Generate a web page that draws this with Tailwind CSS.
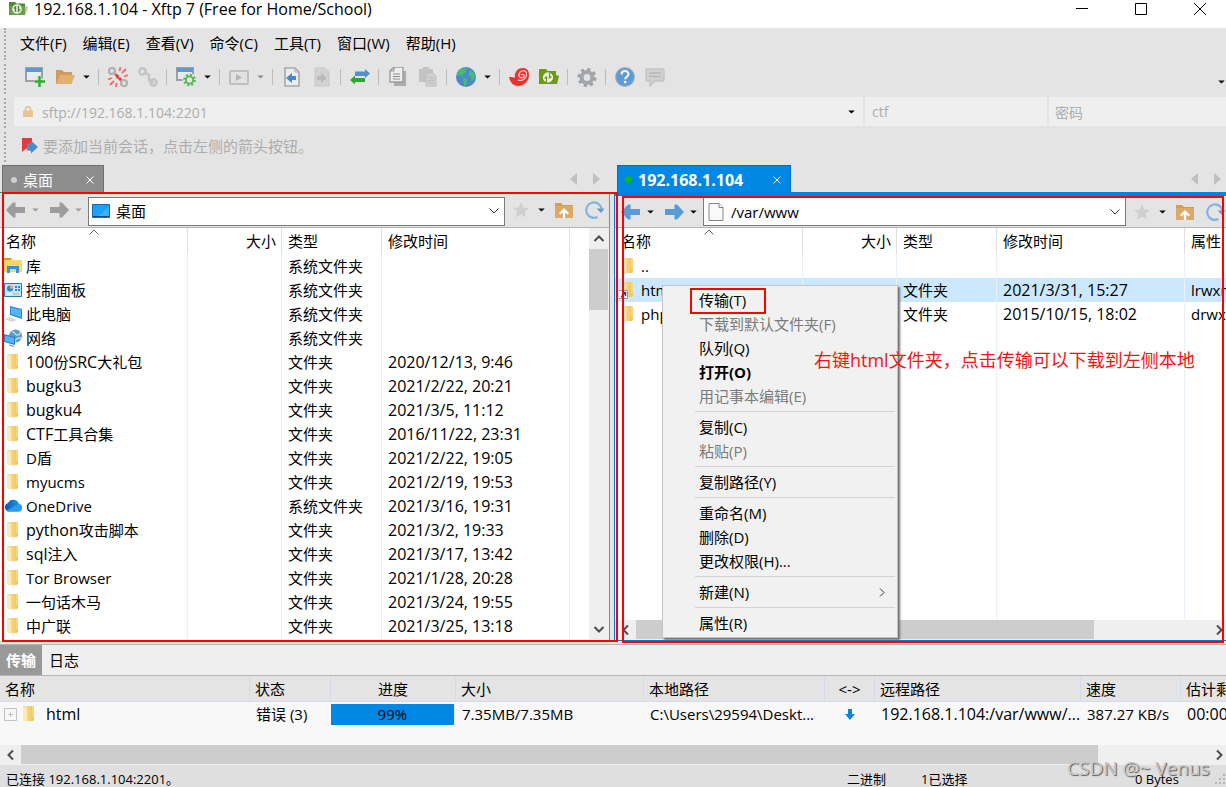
<!DOCTYPE html>
<html lang="zh-CN">
<head>
<meta charset="utf-8">
<title>192.168.1.104 - Xftp 7</title>
<script src="https://cdn.jsdelivr.net/npm/@tailwindcss/browser@4"></script>
</head>
<body class="relative flex h-screen flex-col overflow-hidden bg-[#e4e4e4] font-['Open_Sans','Noto_Sans_CJK_SC',sans-serif] text-[15px] leading-6 text-black whitespace-nowrap">

<svg class="absolute h-0 w-0" aria-hidden="true">
  <defs>
    <linearGradient id="gold" x1="0" x2="1"><stop offset="0" stop-color="#fae198"/><stop offset="1" stop-color="#eec45a"/></linearGradient>
    <linearGradient id="cloud" x1="0" x2="1"><stop offset="0" stop-color="#0a55b0"/><stop offset="1" stop-color="#28a8ea"/></linearGradient>
  </defs>
  <symbol id="folder" viewBox="0 0 18 18"><path d="M3 1h11v14l-1 1H7L3 15z" fill="url(#gold)"/><path d="M3 1l4 2v14l-3.500-1.500L3 14z" fill="#fdeab5"/><path d="M12 1v11l2 1V1z" fill="#f7d67d"/></symbol>
  <symbol id="down" viewBox="0 0 8 5"><path d="M0 .5h8L4 4.500z" fill="currentColor"/></symbol>
  <symbol id="chev-down" viewBox="0 0 12 12"><path d="M1.500 3.500L6 8l4.500-4.500" fill="none" stroke="currentColor"/></symbol>
  <symbol id="bar-left" viewBox="0 0 12 12"><path d="M8 1.500L3.500 6 8 10.500" fill="none" stroke="#4d4d4d" stroke-width="2"/></symbol>
  <symbol id="bar-right" viewBox="0 0 12 12"><path d="M4 1.500L8.500 6 4 10.500" fill="none" stroke="#4d4d4d" stroke-width="2"/></symbol>
  <symbol id="bar-up" viewBox="0 0 12 12"><path d="M1.500 8L6 3.500 10.500 8" fill="none" stroke="#4d4d4d" stroke-width="2"/></symbol>
  <symbol id="bar-down" viewBox="0 0 12 12"><path d="M1.500 4L6 8.500 10.500 4" fill="none" stroke="#4d4d4d" stroke-width="2"/></symbol>
  <symbol id="arrow-l" viewBox="0 0 20 16"><path d="M0 8l7-7.500h2.500V5H19v6H9.500v4.500H7z" fill="currentColor"/></symbol>
  <symbol id="arrow-r" viewBox="0 0 20 16"><path d="M20 8l-7-7.500h-2.500V5H1v6h9.500v4.500H13z" fill="currentColor"/></symbol>
  <symbol id="star" viewBox="0 0 16 16"><path d="M8 0l2.300 5.400 5.700.5-4.300 3.800 1.300 5.800L8 12.400 3 15.500l1.300-5.800L0 5.900l5.700-.5z" fill="#cfcfcf"/></symbol>
  <symbol id="upfolder" viewBox="0 0 18 16"><path d="M0 1h6l2 2h10v13H0z" fill="#d39d58"/><path d="M0 4h18v12H0z" fill="#dcaa68"/><path d="M9 6l5 5-1.500 1.500-2.300-2.300V16H7.800v-5.800l-2.300 2.300L4 11z" fill="#fff"/></symbol>
  <symbol id="refresh" viewBox="0 0 20 18"><path d="M12.500 16A7.700 7.700 0 1 1 16.500 7.500" fill="none" stroke="#82b3e2" stroke-width="2.200"/><path d="M11.500 7.500h8L16 12z" fill="#5f9dd8"/></symbol>
  <symbol id="doc" viewBox="0 0 16 18"><path d="M1 .5h10L15 4.500v13H1z" fill="#f7f9fa" stroke="#858585"/><path d="M11 .5v4h4" fill="#fff" stroke="#858585"/></symbol>
  <symbol id="xfolder" viewBox="0 0 20 16"><path d="M0 0h7l1.500 2H17v4l3 1-2 8H0z" fill="#6a9c0f"/><circle cx="9" cy="8.500" r="5" fill="#fff"/><path d="M7.500 13V8L5.500 9.500M10.500 4v5l2-1.500" fill="none" stroke="#6a9c0f" stroke-width="1.500"/></symbol>
  <symbol id="close" viewBox="0 0 8 8"><path d="M.5.5l7 7M7.500.5l-7 7" stroke="currentColor" fill="none"/></symbol>
</svg>

<header class="flex h-7 shrink-0 items-start bg-white">
  <svg class="mt-[2px] ml-[9px] h-[14px] w-[20px]" viewBox="0 0 20 14"><path d="M0 0h6l1.500 1.500H16V13H0z" fill="#4f8a3a"/><path d="M0 4h16v9H0z" fill="#6b9c4c"/><path d="M16 4l3 1-2 7h-1z" fill="#b7cf9a"/><circle cx="8" cy="7" r="4.800" fill="#e9f1e2"/><path d="M6.500 10V5L5 6.500M9.500 4v5L11 7.500" fill="none" stroke="#4f8a3a" stroke-width="1.400"/></svg>
  <h1 class="ml-[5px] flex-1 text-base leading-[18px]">192.168.1.104 - Xftp 7 (Free for Home/School)</h1>
  <div class="mr-[2px] flex gap-[11px]">
    <button aria-label="最小化" class="flex h-[18px] w-12 items-center justify-center"><svg class="h-3 w-3" viewBox="0 0 12 12"><path d="M0 5.500h12" stroke="#000"/></svg></button>
    <button aria-label="最大化" class="flex h-[18px] w-12 items-center justify-center"><svg class="h-3 w-3" viewBox="0 0 12 12"><path d="M.5.5h11v11H.5z" fill="none" stroke="#000"/></svg></button>
    <button aria-label="关闭" class="flex h-[18px] w-12 items-center justify-center"><svg class="h-3 w-3" viewBox="0 0 12 12"><path d="M0 0l12 12M12 0L0 12" stroke="#000"/></svg></button>
  </div>
</header>

<section class="flex h-[137px] shrink-0">
  <div class="flex w-[14px] shrink-0 flex-col gap-1 pl-1">
    <span class="h-[32px] border-l-2 border-dotted border-[#a8a8a8]"></span>
    <span class="h-[30px] border-l-2 border-dotted border-[#a8a8a8]"></span>
    <span class="h-[30px] border-l-2 border-dotted border-[#a8a8a8]"></span>
    <span class="h-[30px] border-l-2 border-dotted border-[#a8a8a8]"></span>
  </div>
  <div class="min-w-0 flex-1">
    <nav class="flex h-8 items-center gap-4 pb-[2px] pl-[6px]">
      <button>文件(F)</button><button>编辑(E)</button><button>查看(V)</button><button>命令(C)</button><button>工具(T)</button><button>窗口(W)</button><button>帮助(H)</button>
    </nav>
    <div class="flex h-[34px] items-center pl-[6px] [&>button]:flex [&>button]:h-6 [&>button]:w-[30px] [&>button]:items-center [&>button]:justify-center [&>span]:h-4 [&>span]:border-l [&>span]:border-[#bdbdbd]">
      <button aria-label="新建"><svg class="h-5 w-5" viewBox="0 0 20 20"><path d="M1 1h16v13H1z" fill="#e9ecef" stroke="#9aa0a4" stroke-width="2"/><path d="M1 1h16v4H1z" fill="#5b9bd5"/><path d="M14 9v11M9 14.500h10" stroke="#e4e4e4" stroke-width="5"/><path d="M14.500 9v11M9.500 14.500H20" stroke="#25b12b" stroke-width="2.400"/></svg></button>
      <button aria-label="打开"><svg class="h-5 w-5" viewBox="0 0 20 20"><path d="M1 3h6l2 2h8v4H5l-3 8H1z" fill="#cf9a5a"/><path d="M5 8h15l-3.500 9H1z" fill="#e0b070"/></svg></button>
      <button aria-label="打开列表" class="max-w-[13px]"><svg class="h-[4px] w-[7px]"><use href="#down"/></svg></button>
      <span class="ml-[5px] mr-[4px]"></span>
      <button aria-label="断开"><svg class="h-5 w-5" viewBox="0 0 20 20"><circle cx="4" cy="4" r="3" fill="none" stroke="#b0b0b0" stroke-width="2.200"/><circle cx="16" cy="16" r="3" fill="none" stroke="#b0b0b0" stroke-width="2.200"/><path d="M5 5l3 3M12 12l3 3" stroke="#b5b5b5" stroke-width="3"/><path d="M11.500 4l1-4M14 6l4-4M16 9.500l4-1.500M4 11l-4 1.500M6 14l-4 4M8.500 16l-.5 4" stroke="#ee6b6b" stroke-width="1.800"/><path d="M7.500 7.500l1.500 1M11 11l2 2M9.500 8v3.500" stroke="#e8323c" stroke-width="2.600"/></svg></button>
      <button aria-label="连接"><svg class="h-5 w-5" viewBox="0 0 20 20"><circle cx="4.500" cy="4.500" r="3.200" fill="none" stroke="#c4c4c4" stroke-width="2.400"/><circle cx="15.500" cy="15.500" r="3.200" fill="none" stroke="#c4c4c4" stroke-width="2.400"/><path d="M6 5l5 3v5l5 3" fill="none" stroke="#c4c4c4" stroke-width="2.400"/></svg></button>
      <span class="ml-[3px] mr-[4px]"></span>
      <button aria-label="属性"><svg class="h-5 w-5" viewBox="0 0 20 20"><path d="M1 1h16v12H1z" fill="#e9ecef" stroke="#9aa0a4" stroke-width="2"/><path d="M1 1h16v4H1z" fill="#5b9bd5"/><circle cx="13.500" cy="13" r="7" fill="#e4e4e4"/><circle cx="13.500" cy="13" r="5" fill="none" stroke="#58b758" stroke-width="2.600" stroke-dasharray="2 1.900"/><circle cx="13.500" cy="13" r="3.600" fill="none" stroke="#58b758" stroke-width="1.800"/></svg></button>
      <button aria-label="属性列表" class="max-w-[13px]"><svg class="h-[4px] w-[7px]"><use href="#down"/></svg></button>
      <span class="ml-[5px] mr-[4px]"></span>
      <button aria-label="运行"><svg class="h-5 w-5" viewBox="0 0 20 20"><rect x="1" y="4" width="18" height="13" rx="1" fill="#e2e2e2" stroke="#c0c0c0" stroke-width="2"/><path d="M7 7l6 3.500L7 14z" fill="#b5b5b5"/></svg></button>
      <button aria-label="运行列表" class="max-w-[13px] text-[#8a8a8a]"><svg class="h-[4px] w-[7px]"><use href="#down"/></svg></button>
      <span class="ml-[5px] mr-[4px]"></span>
      <button aria-label="传到左侧"><svg class="h-5 w-5" viewBox="0 0 20 20"><path d="M3 1h10l4 4v14H3z" fill="#ececec" stroke="#a5a9ac" stroke-width="1.600"/><path d="M13 1v4h4" fill="none" stroke="#a5a9ac"/><path d="M4 11l6-5v3h4v4h-4v3z" fill="#4489cc"/></svg></button>
      <button aria-label="传到右侧"><svg class="h-5 w-5" viewBox="0 0 20 20"><path d="M3 1h10l4 4v14H3z" fill="#d2d2d2" stroke="#c8c8c8"/><path d="M15 11l-6-5v3H5v4h4v3z" fill="#bababa"/></svg></button>
      <span class="ml-[3px] mr-[4px]"></span>
      <button aria-label="同步"><svg class="h-5 w-5" viewBox="0 0 20 20"><path d="M5 4.500h10V2l5 4.500-5 4.500V9H5z" fill="#4f8fcf"/><path d="M15 11H5V8.500L0 13l5 4.500V15h10z" fill="#2ba52b"/></svg></button>
      <span class="ml-[3px] mr-[4px]"></span>
      <button aria-label="复制"><svg class="h-5 w-5" viewBox="0 0 20 20"><path d="M6 4h12v15H6z" fill="#a9adb1"/><path d="M2 4l4-4h9v15H2z" fill="#eee" stroke="#9a9da0" stroke-width="1.400"/><path d="M2 4h4V0M5 7h7M5 9.500h7M5 12h7" fill="none" stroke="#8c8f92"/></svg></button>
      <button aria-label="粘贴"><svg class="h-5 w-5" viewBox="0 0 20 20"><path d="M1 2h4V0h6v2h4v13H1z" fill="#c3c3c3"/><path d="M8 6h7l3 3v10H8z" fill="#d0d0d0" stroke="#c0c0c0"/><path d="M10 11h6M10 13.500h6M10 16h6" stroke="#bdbdbd"/></svg></button>
      <span class="ml-[3px] mr-[4px]"></span>
      <button aria-label="语言"><svg class="h-5 w-5" viewBox="0 0 20 20"><circle cx="10" cy="10" r="10" fill="#4d88c8"/><path d="M2 4C5 1 8 1 10 1.500L10 5 7 7v3L4 8 1 9c0-2 0-3 1-5zM13 4c3-1 5 1 6 4-1 2-1 5-3 6-2-2 0-5-3-6zM7 11l4 1c1 3-1 6-2 7-2-1-1-4-2-8z" fill="#45bd6e"/></svg></button>
      <button aria-label="语言列表" class="max-w-[13px]"><svg class="h-[4px] w-[7px]"><use href="#down"/></svg></button>
      <span class="ml-[5px] mr-[4px]"></span>
      <button aria-label="Xshell"><svg class="h-5 w-5" viewBox="0 0 20 20"><path d="M0 10c3 0 5 0 6 1-1-5 2-10 8-10 4 0 6 3 6 7 0 6-5 11-11 11-5 0-8-4-9-9z" fill="#ee3030"/><path d="M17 5c-3-3-8 0-7 4 1 3 6 2 5-1-1-1-2-1-3 0M17 5c2 5-3 10-8 8" fill="none" stroke="#f7e4e4" stroke-width="1.100"/></svg></button>
      <button aria-label="Xftp"><svg class="h-4 w-5"><use href="#xfolder"/></svg></button>
      <span class="ml-[3px] mr-[4px]"></span>
      <button aria-label="选项"><svg class="h-5 w-5" viewBox="0 0 20 20"><circle cx="10" cy="10.500" r="8" fill="none" stroke="#9b9ea0" stroke-width="3" stroke-dasharray="3.140 3.140"/><circle cx="10" cy="10.500" r="5.400" fill="none" stroke="#a3a6a8" stroke-width="4"/></svg></button>
      <span class="ml-[3px] mr-[4px]"></span>
      <button aria-label="帮助"><svg class="h-5 w-5" viewBox="0 0 20 20"><circle cx="10" cy="10" r="10" fill="#9aaec2"/><circle cx="10" cy="10" r="8.800" fill="#5f9ad8"/><path d="M6.500 7.500C6.500 3 13.500 3 13.500 7.300c0 2.400-3.300 2.500-3.300 4.900" fill="none" stroke="#fff" stroke-width="2"/><circle cx="10.200" cy="15" r="1.300" fill="#fff"/></svg></button>
      <button aria-label="反馈"><svg class="h-5 w-5" viewBox="0 0 20 20"><path d="M2 2h16l1 1v10l-1 1h-8l-5 5v-5H2l-1-1V3z" fill="#d0d0d0" stroke="#c3c3c3" stroke-width="1.500"/><path d="M4 6h12M4 9.500h12" stroke="#b8b8b8" stroke-width="1.500"/></svg></button>
      <button aria-label="更多" class="ml-auto max-w-[10px] self-end"><svg class="h-[4px] w-[7px]"><use href="#down"/></svg></button>
    </div>
    <form class="mt-[3px] flex h-[29px] gap-[2px] text-[#adadad]">
      <div class="flex min-w-0 flex-1 items-center bg-[#efefef] pl-[9px]">
        <svg class="h-[12px] w-[10px] shrink-0" viewBox="0 0 10 12"><path d="M2.500 5V3a2.500 2.300 0 0 1 5 0v2" fill="none" stroke="#e5bf88" stroke-width="1.600"/><path d="M0 4.500h10V11H0z" fill="#e8c48e"/></svg>
        <input aria-label="地址" value="sftp://192.168.1.104:2201" class="ml-[9px] min-w-0 flex-1 bg-transparent pt-[2px] text-[14px] outline-none">
        <button type="button" aria-label="地址列表" class="flex w-6 items-center justify-center text-black"><svg class="h-[4px] w-[7px]"><use href="#down"/></svg></button>
      </div>
      <input aria-label="用户名" value="ctf" class="w-[182px] bg-[#efefef] px-[7px] text-[14px] outline-none">
      <input aria-label="密码" placeholder="密码" class="w-[177px] bg-[#efefef] px-[6px] pt-[2px] text-[14px] outline-none placeholder:text-[#adadad]">
    </form>
    <div class="flex h-[38px] items-center pt-[2px] pl-[7px] text-[#adadad]">
      <button aria-label="添加会话"><svg class="h-[18px] w-[18px]" viewBox="0 0 18 18"><path d="M1 1h10v14l-5-4-5 4z" fill="#e23a40"/><path d="M6 6.500h4v-3l7 6.500-7 6.500v-3H6z" fill="#4c8ccb"/></svg></button>
      <p class="ml-[4px]">要添加当前会话，点击左侧的箭头按钮。</p>
    </div>
  </div>
</section>

<main class="grid min-h-0 flex-1 grid-cols-2 grid-rows-[minmax(0,1fr)]">
  <!-- local pane -->
  <section class="mr-[3px] flex min-h-0 min-w-0 flex-col">
    <div class="flex h-7 shrink-0 border-b border-[#6f6f6f] pl-[2px]">
      <button class="flex w-[102px] items-center border border-b-0 border-[#6f6f6f] bg-[#8d8d8d] pt-[2px] pl-[8px] text-white"><i class="mr-[6px] h-[6px] w-[6px] rounded-full bg-[#d0d0d0]"></i>桌面<svg class="mr-[9px] ml-auto h-2 w-2"><use href="#close"/></svg></button>
      <span class="flex-1"></span>
      <button aria-label="上一个" class="mr-[14px]"><svg class="h-3 w-2" viewBox="0 0 8 12"><path d="M7 0v12L0 6z" fill="#bfbfbf"/></svg></button>
      <button aria-label="下一个" class="mr-[10px]"><svg class="h-3 w-2" viewBox="0 0 8 12"><path d="M1 0v12l7-6z" fill="#bfbfbf"/></svg></button>
    </div>
    <div class="flex h-[35px] shrink-0 items-center border-r border-b border-r-[#8a8a8a] border-b-[#b5b5b5] pl-[6px] [&_button]:flex [&_button]:shrink-0 [&_button]:items-center [&_button]:justify-center">
      <div class="mr-[5px] flex text-[#9c9c9c]"><button aria-label="后退"><svg class="h-4 w-5"><use href="#arrow-l"/></svg></button><button aria-label="后退列表" class="w-[18px]"><svg class="h-[4px] w-[7px]"><use href="#down"/></svg></button></div>
      <div class="mr-[1px] flex text-[#9c9c9c]"><button aria-label="前进"><svg class="h-4 w-5"><use href="#arrow-r"/></svg></button><button aria-label="前进列表" class="w-[18px]"><svg class="h-[4px] w-[7px]"><use href="#down"/></svg></button></div>
      <div class="mt-[2px] flex h-[29px] min-w-0 flex-1 items-center border border-[#7a7a7a] bg-white">
        <svg class="ml-[3px] h-[14px] w-[18px] shrink-0" viewBox="0 0 18 14"><path d="M.5.500h17v13H.5z" fill="#1ea0f8" stroke="#0f6cae"/><path d="M1 12.500h16" stroke="#0b4f86"/><path d="M17 2v10H7z" fill="#3bb0ff"/></svg>
        <input aria-label="本地路径" value="桌面" class="ml-[6px] min-w-0 flex-1 bg-transparent outline-none">
        <button aria-label="路径列表" class="w-5 text-[#333]"><svg class="h-3 w-3"><use href="#chev-down"/></svg></button>
      </div>
      <button aria-label="收藏" class="w-[31px]"><svg class="h-4 w-4"><use href="#star"/></svg></button>
      <button aria-label="收藏列表" class="w-[10px]"><svg class="h-[4px] w-[7px]"><use href="#down"/></svg></button>
      <button aria-label="上级目录" class="w-[35px]"><svg class="h-4 w-[18px]"><use href="#upfolder"/></svg></button>
      <button aria-label="刷新" class="w-[28px]"><svg class="h-[18px] w-5"><use href="#refresh"/></svg></button>
    </div>
    <div class="flex min-h-0 flex-1 border-r border-[#8a8a8a] bg-white">
      <div class="relative min-w-0 flex-1 overflow-hidden">
        <svg class="absolute top-[1px] left-[89px] h-[6px] w-[10px]" viewBox="0 0 10 6"><path d="M.5 5.500L5 1l4.500 4.500" fill="none" stroke="#666"/></svg>
        <table class="w-full table-fixed border-separate border-spacing-0 text-left [&_b]:text-base [&_b]:leading-6 [&_b]:font-normal [&_svg]:mr-[4px] [&_svg]:h-[18px] [&_svg]:w-[18px] [&_svg]:shrink-0 [&_td]:h-6 [&_td]:border-r [&_td]:border-[#e9f1f8] [&_td]:p-0 [&_td]:pl-[6px] [&_td:first-child]:pl-1 [&_td:last-child]:border-0 [&_td>div]:flex [&_td>div]:h-6 [&_td>div]:items-center [&_th]:h-[26px] [&_th]:border-r [&_th]:border-[#e0e0e0] [&_th]:p-0 [&_th]:px-[6px] [&_th]:font-normal [&_th:nth-child(2)]:pr-[5px] [&_th:last-child]:border-0 [&_td:nth-child(4)]:text-base">
          <colgroup><col class="w-[188px]"><col class="w-[94px]"><col class="w-[100px]"><col class="w-[188px]"><col></colgroup>
          <thead><tr><th>名称</th><th class="text-right">大小</th><th>类型</th><th>修改时间</th><th></th></tr></thead>
          <tbody>
            <tr><td><div><svg viewBox="0 0 18 18"><path d="M0 1h7l1 2H0z" fill="#d99a10"/><path d="M0 3h18v12H0z" fill="#fcd568"/><path d="M3 16V9h12v7h-3v-4H6v4z" fill="#3b8fd9"/></svg>库</div></td><td></td><td>系统文件夹</td><td></td><td></td></tr>
            <tr><td><div><svg viewBox="0 0 18 18"><path d="M.5 2.500h17v13H.5z" fill="#bfe5fa" stroke="#1c7fb8"/><circle cx="6" cy="7.500" r="3" fill="#2f86d2"/><path d="M6 7.500v-3a3 3 0 0 1 3 3z" fill="#f6b23c"/><path d="M11 5h2v2h-2zM14 5h2v2h-2zM11 8h2v2h-2zM14 8h2v2h-2z" fill="#2f86d2"/><path d="M3 13h5" stroke="#fff"/><path d="M9 13h6" stroke="#f6a03c"/></svg>控制面板</div></td><td></td><td>系统文件夹</td><td></td><td></td></tr>
            <tr><td><div><svg viewBox="0 0 18 18"><path d="M6 1l12 3v10L6 10z" fill="#2e86cc"/><path d="M7 2.500l10 2.300v7.400L7 9z" fill="#57b5f7"/><path d="M0 14l6-2 7 3-5 2z" fill="#d5dadd"/></svg>此电脑</div></td><td></td><td>系统文件夹</td><td></td><td></td></tr>
            <tr><td><div><svg viewBox="0 0 18 18"><circle cx="11.500" cy="7" r="6.500" fill="#5d9bbf"/><path d="M8 2c3 1 3 5 6 4s2-3 2-3M11 13c0-3 3-4 6-4" fill="none" stroke="#b9dbe9" stroke-width="1.500"/><path d="M0 5l11 3v8L0 13z" fill="#2a7fc9"/><path d="M1 6.500l9 2.300v5.700l-9-2.300z" fill="#54b3f5"/><path d="M5 16l5 1.500" stroke="#9aa" stroke-width="1.500"/></svg>网络</div></td><td></td><td>系统文件夹</td><td></td><td></td></tr>
            <tr><td><div><svg><use href="#folder"/></svg><b>100</b>份<b>SRC</b>大礼包</div></td><td></td><td>文件夹</td><td>2020/12/13, 9:46</td><td></td></tr>
            <tr><td><div><svg><use href="#folder"/></svg><b>bugku3</b></div></td><td></td><td>文件夹</td><td>2021/2/22, 20:21</td><td></td></tr>
            <tr><td><div><svg><use href="#folder"/></svg><b>bugku4</b></div></td><td></td><td>文件夹</td><td>2021/3/5, 11:12</td><td></td></tr>
            <tr><td><div><svg><use href="#folder"/></svg><b>CTF</b>工具合集</div></td><td></td><td>文件夹</td><td>2016/11/22, 23:31</td><td></td></tr>
            <tr><td><div><svg><use href="#folder"/></svg>D盾</div></td><td></td><td>文件夹</td><td>2021/2/22, 19:05</td><td></td></tr>
            <tr><td><div><svg><use href="#folder"/></svg>myucms</div></td><td></td><td>文件夹</td><td>2021/2/19, 19:53</td><td></td></tr>
            <tr><td><div><svg viewBox="0 0 18 18"><path d="M4 14.500a4.500 4.500 0 0 1 0-8.500 6 6 0 0 1 11 1 3.800 3.800 0 0 1 0 7.500z" fill="url(#cloud)"/><path d="M2 14L11 9l5-1.500c3 2 2 7-1 7H4z" fill="#28a0e8"/></svg>OneDrive</div></td><td></td><td>系统文件夹</td><td>2021/3/16, 19:31</td><td></td></tr>
            <tr><td><div><svg><use href="#folder"/></svg><b>python</b>攻击脚本</div></td><td></td><td>文件夹</td><td>2021/3/2, 19:33</td><td></td></tr>
            <tr><td><div><svg><use href="#folder"/></svg><b>sql</b>注入</div></td><td></td><td>文件夹</td><td>2021/3/17, 13:42</td><td></td></tr>
            <tr><td><div><svg><use href="#folder"/></svg>Tor Browser</div></td><td></td><td>文件夹</td><td>2021/1/28, 20:28</td><td></td></tr>
            <tr><td><div><svg><use href="#folder"/></svg>一句话木马</div></td><td></td><td>文件夹</td><td>2021/3/24, 19:55</td><td></td></tr>
            <tr><td><div><svg><use href="#folder"/></svg>中广联</div></td><td></td><td>文件夹</td><td>2021/3/25, 13:18</td><td></td></tr>
            <tr aria-hidden="true"><td></td><td></td><td></td><td></td><td></td></tr>
          </tbody>
        </table>
      </div>
      <div class="flex w-5 flex-col bg-[#efefef] pr-[1px]">
        <button aria-label="向上滚动" class="flex h-[21px] items-center justify-center"><svg class="h-3 w-3"><use href="#bar-up"/></svg></button>
        <div class="h-[61px] bg-[#cdcdcd]"></div>
        <button aria-label="向下滚动" class="mt-auto flex h-[25px] items-center justify-center"><svg class="h-3 w-3"><use href="#bar-down"/></svg></button>
      </div>
    </div>
    <div class="h-[3px] shrink-0 bg-[#e4e4e4]"></div>
  </section>

  <!-- remote pane -->
  <section class="mb-[3px] flex min-h-0 min-w-0 flex-col overflow-hidden border-b border-[#0078d7]">
    <div class="flex h-[27px] shrink-0 pl-1">
      <button class="flex w-[174px] items-center border border-b-0 border-[#0070c8] bg-[#0088e4] pt-[1px] pl-[7px] text-base font-bold text-white"><i class="mr-[6px] h-[7px] w-[7px] rounded-full bg-[#10b810]"></i>192.168.1.104<svg class="mr-[9px] ml-auto h-2 w-2"><use href="#close"/></svg></button>
      <span class="flex-1"></span>
      <button aria-label="上一个" class="mr-[14px]"><svg class="h-3 w-2" viewBox="0 0 8 12"><path d="M7 0v12L0 6z" fill="#bfbfbf"/></svg></button>
      <button aria-label="下一个" class="mr-[5px]"><svg class="h-3 w-2" viewBox="0 0 8 12"><path d="M1 0v12l7-6z" fill="#bfbfbf"/></svg></button>
    </div>
    <div class="ml-[1px] h-1 shrink-0 bg-[#0083dc]"></div>
    <div class="ml-[1px] flex min-h-0 flex-1 flex-col border-l border-[#0078d7]">
      <div class="-mr-1 flex h-[32px] shrink-0 items-center border-b border-[#b5b5b5] pl-[6px] [&_button]:flex [&_button]:shrink-0 [&_button]:items-center [&_button]:justify-center">
        <div class="mr-[5px] flex"><button aria-label="后退" class="text-[#5b9bd5]"><svg class="h-4 w-5"><use href="#arrow-l"/></svg></button><button aria-label="后退列表" class="w-[18px]"><svg class="h-[4px] w-[7px]"><use href="#down"/></svg></button></div>
        <div class="mr-[1px] flex"><button aria-label="前进" class="text-[#5b9bd5]"><svg class="h-4 w-5"><use href="#arrow-r"/></svg></button><button aria-label="前进列表" class="w-[18px]"><svg class="h-[4px] w-[7px]"><use href="#down"/></svg></button></div>
        <div class="flex h-[29px] min-w-0 flex-1 items-center border border-[#7a7a7a] bg-white">
          <svg class="ml-[4px] h-[18px] w-4 shrink-0"><use href="#doc"/></svg>
          <input aria-label="远程路径" value="/var/www" class="ml-[7px] min-w-0 flex-1 bg-transparent outline-none">
          <button aria-label="路径列表" class="w-5 text-[#333]"><svg class="h-3 w-3"><use href="#chev-down"/></svg></button>
        </div>
        <button aria-label="收藏" class="w-[31px]"><svg class="h-4 w-4"><use href="#star"/></svg></button>
        <button aria-label="收藏列表" class="w-[10px]"><svg class="h-[4px] w-[7px]"><use href="#down"/></svg></button>
        <button aria-label="上级目录" class="w-[35px]"><svg class="h-4 w-[18px]"><use href="#upfolder"/></svg></button>
        <button aria-label="刷新" class="w-[28px]"><svg class="h-[18px] w-5"><use href="#refresh"/></svg></button>
      </div>
      <div class="relative min-h-0 flex-1 overflow-hidden bg-white">
        <svg class="absolute top-[1px] left-[89px] h-[6px] w-[10px]" viewBox="0 0 10 6"><path d="M.5 5.500L5 1l4.500 4.500" fill="none" stroke="#666"/></svg>
        <table class="h-full w-[720px] table-fixed border-separate border-spacing-0 text-left [&_svg]:mr-[4px] [&_svg]:h-[18px] [&_svg]:w-[18px] [&_svg]:shrink-0 [&_td]:h-6 [&_td]:border-r [&_td]:border-[#e9f1f8] [&_td]:p-0 [&_td]:pl-[6px] [&_td:first-child]:pl-1 [&_td>div]:flex [&_td>div]:h-6 [&_td>div]:items-center [&_th]:h-[26px] [&_th]:border-r [&_th]:border-[#e0e0e0] [&_th]:p-0 [&_th]:px-[6px] [&_th]:font-normal [&_th:nth-child(2)]:pr-[5px] [&_td:nth-child(4)]:text-base">
          <colgroup><col class="w-[188px]"><col class="w-[94px]"><col class="w-[100px]"><col class="w-[188px]"><col></colgroup>
          <thead><tr><th>名称</th><th class="text-right">大小</th><th>类型</th><th>修改时间</th><th>属性</th></tr></thead>
          <tbody>
            <tr><td><div><svg><use href="#folder"/></svg>..</div></td><td></td><td></td><td></td><td></td></tr>
            <tr class="bg-[#cce8ff]"><td><div><svg viewBox="0 0 18 18"><use href="#folder"/><path d="M-.5 9.500h9v8h-9z" fill="#fff" stroke="#999"/><path d="M2 16l4-4M3 11.500h3.500V15" stroke="#2b3f8f" fill="none" stroke-width="1.500"/></svg>html</div></td><td></td><td>文件夹</td><td>2021/3/31, 15:27</td><td>lrwxrwxrwx</td></tr>
            <tr><td><div><svg><use href="#folder"/></svg>phpmyadmin</div></td><td></td><td>文件夹</td><td>2015/10/15, 18:02</td><td>drwxr-xr-x</td></tr>
            <tr class="h-full" aria-hidden="true"><td></td><td></td><td></td><td></td><td></td></tr>
          </tbody>
        </table>
      </div>
      <div class="flex h-[20px] shrink-0 bg-[#efefef] pb-[1px]">
        <button aria-label="向左滚动" class="flex w-[21px] items-center justify-center"><svg class="h-3 w-3"><use href="#bar-left"/></svg></button>
        <div class="w-[458px] bg-[#cdcdcd]"></div>
        <button aria-label="向右滚动" class="ml-auto flex w-[15px] items-center justify-center"><svg class="h-3 w-3"><use href="#bar-right"/></svg></button>
      </div>
    </div>
  </section>
</main>

<section class="shrink-0 bg-[#f8f8f8]">
  <div class="flex h-8 border-y border-[#b4b4b4] bg-[#efefef]">
    <button class="w-[42px] bg-[#999] pb-[1px] font-bold text-white">传输</button>
    <button class="px-[7px] pb-[1px]">日志</button>
  </div>
  <div class="h-[67px] overflow-hidden">
    <table class="w-[1260px] table-fixed border-separate border-spacing-0 text-left [&_td]:h-[24px] [&_td]:p-0 [&_td]:pl-[6px] [&_th]:h-[26px] [&_th]:border-r [&_th]:border-b [&_th]:border-[#d3dcea] [&_th]:bg-[#e4e4e4] [&_th]:p-0 [&_th]:px-[5px] [&_th]:font-normal">
      <colgroup><col class="w-[250px]"><col class="w-[81px]"><col class="w-[125px]"><col class="w-[188px]"><col class="w-[181px]"><col class="w-[50px]"><col class="w-[206px]"><col class="w-[100px]"><col></colgroup>
      <thead><tr><th>名称</th><th>状态</th><th class="text-center">进度</th><th>大小</th><th>本地路径</th><th class="text-center">&lt;-&gt;</th><th>远程路径</th><th>速度</th><th>估计剩余时间</th></tr></thead>
      <tbody><tr>
        <td><div class="-ml-[2px] flex h-6 items-center text-base leading-6"><button aria-label="展开"><svg class="h-[13px] w-[13px]" viewBox="0 0 13 13"><path d="M.5.500h12v12H.5zM4 6.500h5M6.500 4v5" fill="none" stroke="#c2c2c2"/></svg></button><svg class="ml-[3px] h-[18px] w-[18px]"><use href="#folder"/></svg><span class="ml-[8px]">html</span></div></td>
        <td>错误 (3)</td>
        <td class="!p-0"><div role="progressbar" aria-label="进度" aria-valuenow="99" class="mr-[1px] h-[21px] bg-[#e4e4e4] text-center leading-[21px]"><div class="h-[21px] bg-[#0088e4]" style="width:99%">99%</div></div></td>
        <td>7.35MB/7.35MB</td><td>C:\Users\29594\Deskt...</td>
        <td class="!p-0"><svg class="mx-auto h-[11px] w-[10px]" viewBox="0 0 10 11"><path d="M3 0h4v5h3l-5 6-5-6h3z" fill="#0b84dd"/></svg></td>
        <td class="text-base leading-6">192.168.1.104:/var/www/...</td><td>387.27 KB/s</td><td class="text-base leading-6">00:00:00</td>
      </tr></tbody>
    </table>
  </div>
  <div class="mt-[2px] flex h-[20px] bg-[#efefef] pb-[1px]">
    <button aria-label="向左滚动" class="flex w-[21px] items-center justify-center"><svg class="h-3 w-3"><use href="#bar-left"/></svg></button>
    <div class="flex-1 bg-[#cdcdcd]"></div>
    <button aria-label="向右滚动" class="flex w-32 items-center justify-end pr-[1px]"><svg class="h-3 w-3"><use href="#bar-right"/></svg></button>
  </div>
  <footer class="flex h-[22px] items-center bg-[#dfdfdf] pt-[6px] pl-[6px] text-[13px]">
    <span class="flex-1">已连接 192.168.1.104:2201。</span>
    <span class="w-[74px]">二进制</span><span class="w-[214px]">1已选择</span><span class="w-[80px]">0 Bytes</span>
    <svg class="h-[10px] w-[11px]" viewBox="0 0 11 10"><path d="M8 0h2v2H8zM4 4h2v2H4zM8 4h2v2H8zM0 8h2v2H0zM4 8h2v2H4zM8 8h2v2H8z" fill="#b5b5b5"/></svg>
  </footer>
</section>

<!-- context menu -->
<div role="menu" class="absolute top-[285px] left-[662px] flex w-[236px] flex-col border border-[#c4c4c4] bg-[#f1f1f1] pt-[2px] pb-[2px] shadow-[2px_2px_2px_#707070] [&>button]:h-6 [&>button]:pl-9 [&>button]:text-left [&>hr]:my-[3px] [&>hr]:mr-[2px] [&>hr]:ml-8 [&>hr]:border-[#d2d2d2]">
  <button role="menuitem">传输(T)</button>
  <button role="menuitem" class="text-[#7a7a7a]">下载到默认文件夹(F)</button>
  <button role="menuitem">队列(Q)</button>
  <button role="menuitem" class="font-bold">打开(O)</button>
  <button role="menuitem" class="text-[#7a7a7a]">用记事本编辑(E)</button>
  <hr>
  <button role="menuitem">复制(C)</button>
  <button role="menuitem" class="text-[#7a7a7a]">粘贴(P)</button>
  <hr>
  <button role="menuitem">复制路径(Y)</button>
  <hr>
  <button role="menuitem">重命名(M)</button>
  <button role="menuitem">删除(D)</button>
  <button role="menuitem">更改权限(H)...</button>
  <hr>
  <button role="menuitem" class="flex items-center justify-between pr-[12px]">新建(N)<svg class="h-[9px] w-[6px]" viewBox="0 0 6 9"><path d="M1 .5l4 4-4 4" fill="none" stroke="#333"/></svg></button>
  <hr>
  <button role="menuitem">属性(R)</button>
</div>

<!-- annotations -->
<div class="pointer-events-none absolute top-[192px] left-[2px] h-[450px] w-[616px] border-2 border-[#f00]"></div>
<div class="pointer-events-none absolute top-[196px] left-[622px] h-[447px] w-[602px] border-2 border-[#f00]"></div>
<div class="pointer-events-none absolute top-[288px] left-[690px] h-[26px] w-[76px] border-2 border-[#f00]"></div>
<p class="absolute top-[348px] left-[814px] text-[18px] text-[#f01414]">右键html文件夹，点击传输可以下载到左侧本地</p>
<p class="absolute top-[756px] left-[1067px] text-[19px] text-[#c9c9c9] [text-shadow:1px_1px_1px_#555]">CSDN @~ Venus</p>
</body>
</html>
